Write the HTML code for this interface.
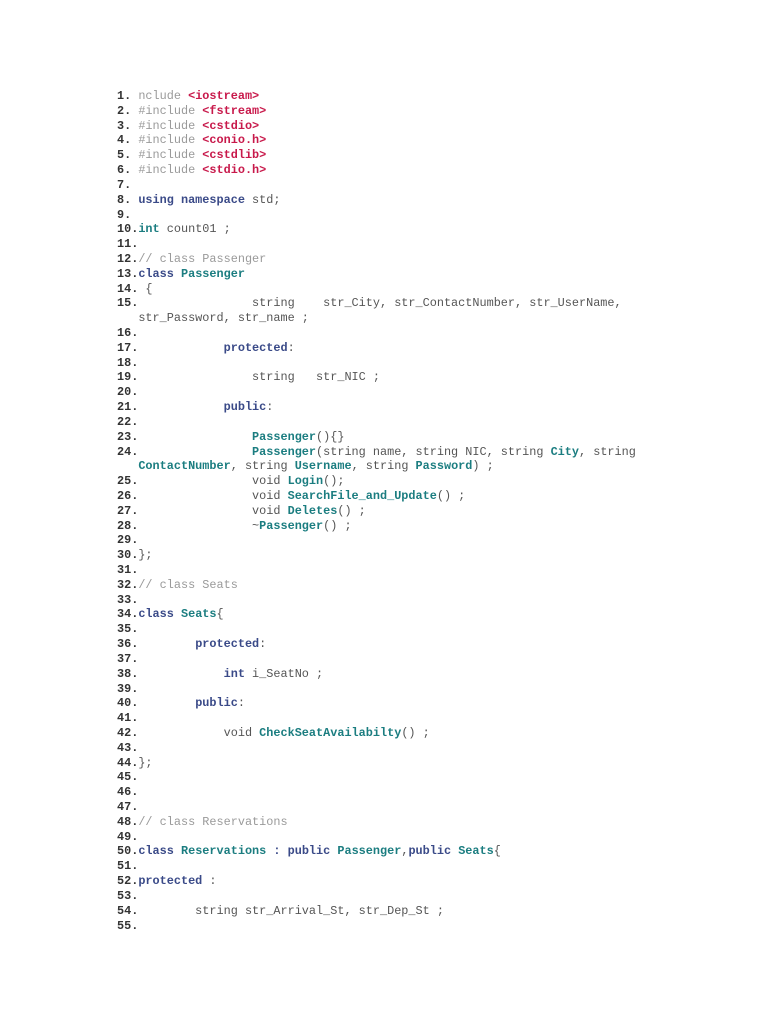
<!DOCTYPE html>
<html><head><meta charset="utf-8"><style>
html,body{margin:0;padding:0;background:#fff;width:768px;height:1024px;overflow:hidden}
pre{position:absolute;left:117px;top:89px;margin:0;font-family:"Liberation Mono",monospace;font-size:11.85px;line-height:14.82px;color:#555}
.n{color:#333;font-weight:bold}
.g{color:#9a9a9a}
.r{color:#c8194b;font-weight:bold}
.k{color:#3a4a88;font-weight:bold}
.t{color:#1b7d80;font-weight:bold}
</style></head><body>
<pre><span class="n">1. </span><span class="g">nclude </span><span class="r">&lt;iostream&gt;</span>
<span class="n">2. </span><span class="g">#include </span><span class="r">&lt;fstream&gt;</span>
<span class="n">3. </span><span class="g">#include </span><span class="r">&lt;cstdio&gt;</span>
<span class="n">4. </span><span class="g">#include </span><span class="r">&lt;conio.h&gt;</span>
<span class="n">5. </span><span class="g">#include </span><span class="r">&lt;cstdlib&gt;</span>
<span class="n">6. </span><span class="g">#include </span><span class="r">&lt;stdio.h&gt;</span>
<span class="n">7.</span>
<span class="n">8. </span><span class="k">using namespace</span> std;
<span class="n">9.</span>
<span class="n">10.</span><span class="t">int</span> count01 ;
<span class="n">11.</span>
<span class="n">12.</span><span class="g">// class Passenger</span>
<span class="n">13.</span><span class="k">class</span> <span class="t">Passenger</span>
<span class="n">14.</span> {
<span class="n">15.</span>                string    str_City, str_ContactNumber, str_UserName,
   str_Password, str_name ;
<span class="n">16.</span>
<span class="n">17.</span>            <span class="k">protected</span>:
<span class="n">18.</span>
<span class="n">19.</span>                string   str_NIC ;
<span class="n">20.</span>
<span class="n">21.</span>            <span class="k">public</span>:
<span class="n">22.</span>
<span class="n">23.</span>                <span class="t">Passenger</span>(){}
<span class="n">24.</span>                <span class="t">Passenger</span>(string name, string NIC, string <span class="t">City</span>, string
   <span class="t">ContactNumber</span>, string <span class="t">Username</span>, string <span class="t">Password</span>) ;
<span class="n">25.</span>                void <span class="t">Login</span>();
<span class="n">26.</span>                void <span class="t">SearchFile_and_Update</span>() ;
<span class="n">27.</span>                void <span class="t">Deletes</span>() ;
<span class="n">28.</span>                ~<span class="t">Passenger</span>() ;
<span class="n">29.</span>
<span class="n">30.</span>};
<span class="n">31.</span>
<span class="n">32.</span><span class="g">// class Seats</span>
<span class="n">33.</span>
<span class="n">34.</span><span class="k">class</span> <span class="t">Seats</span>{
<span class="n">35.</span>
<span class="n">36.</span>        <span class="k">protected</span>:
<span class="n">37.</span>
<span class="n">38.</span>            <span class="k">int</span> i_SeatNo ;
<span class="n">39.</span>
<span class="n">40.</span>        <span class="k">public</span>:
<span class="n">41.</span>
<span class="n">42.</span>            void <span class="t">CheckSeatAvailabilty</span>() ;
<span class="n">43.</span>
<span class="n">44.</span>};
<span class="n">45.</span>
<span class="n">46.</span>
<span class="n">47.</span>
<span class="n">48.</span><span class="g">// class Reservations</span>
<span class="n">49.</span>
<span class="n">50.</span><span class="k">class</span> <span class="t">Reservations</span> <span class="k">: public</span> <span class="t">Passenger</span>,<span class="k">public</span> <span class="t">Seats</span>{
<span class="n">51.</span>
<span class="n">52.</span><span class="k">protected</span> :
<span class="n">53.</span>
<span class="n">54.</span>        string str_Arrival_St, str_Dep_St ;
<span class="n">55.</span>
</pre>
</body></html>
